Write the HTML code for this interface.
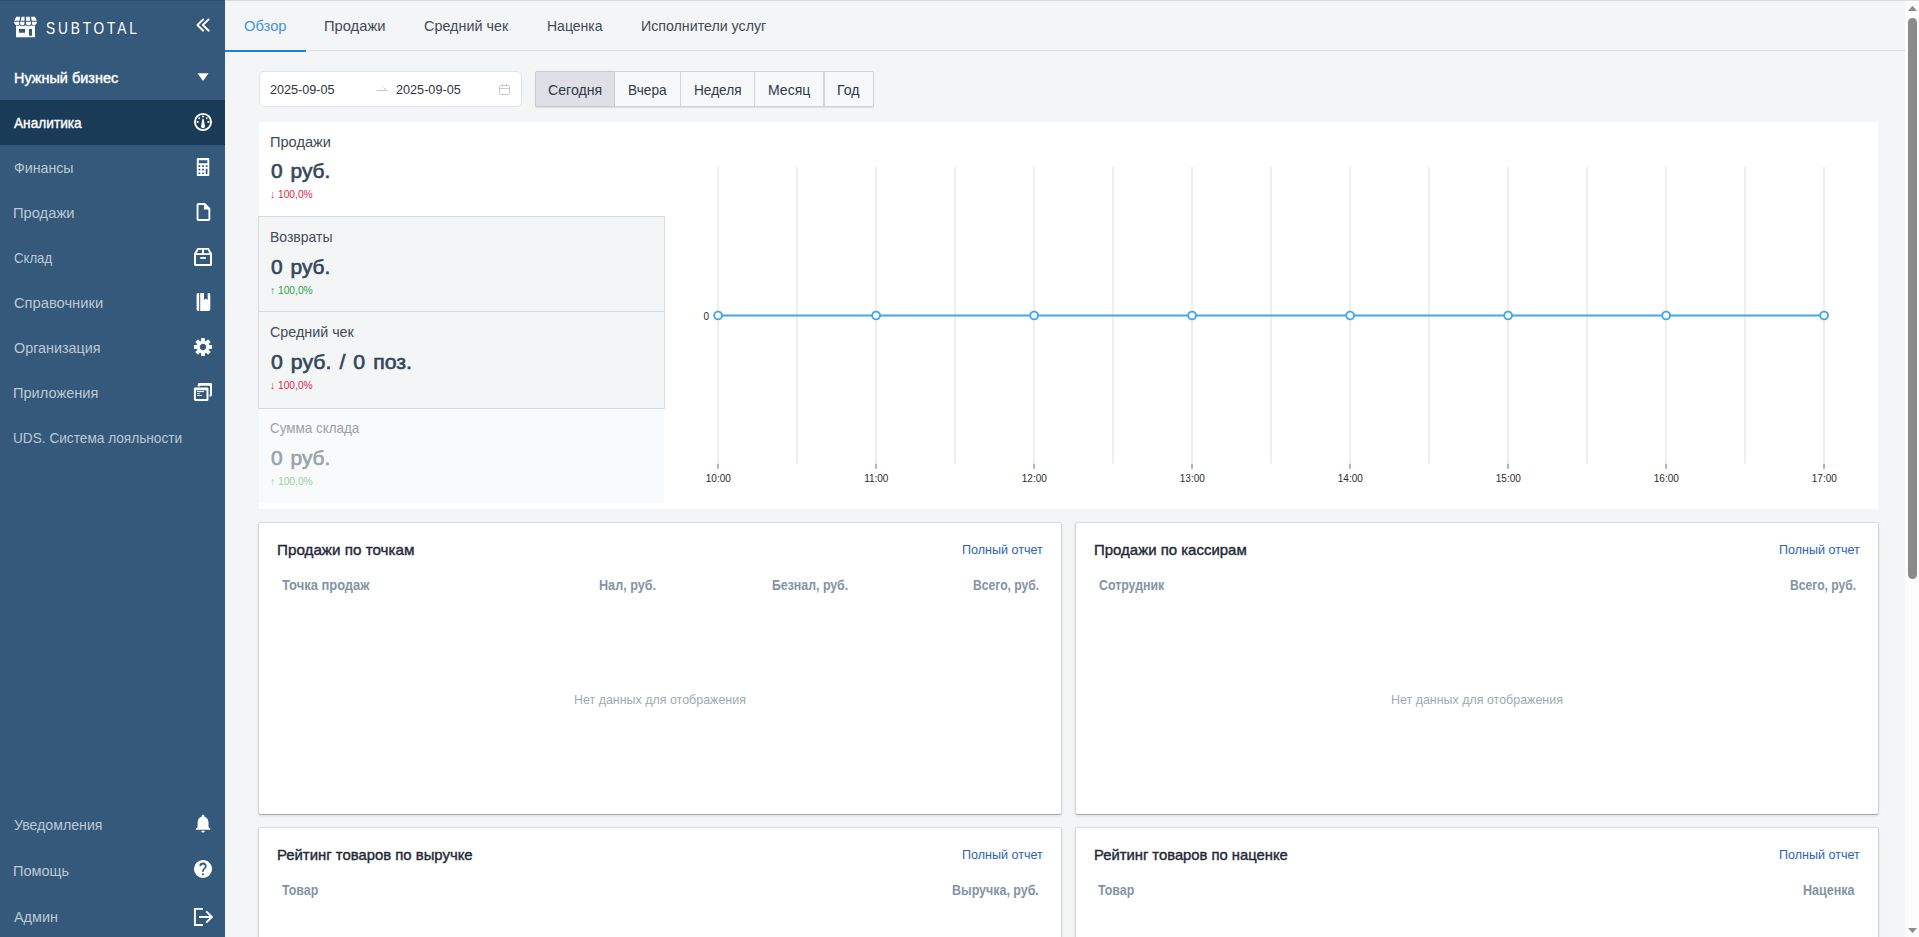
<!DOCTYPE html>
<html lang="ru">
<head>
<meta charset="utf-8">
<title>Subtotal — Аналитика</title>
<style>
*{box-sizing:border-box;margin:0;padding:0}
html,body{width:1919px;height:937px;overflow:hidden}
body{font-family:"Liberation Sans",sans-serif;background:#f4f5f7;color:#2f3e4e;position:relative;font-size:14px}
.t{position:absolute;white-space:nowrap;transform-origin:0 0;display:block}
.b{position:absolute}
#side{left:0;top:0;width:225px;height:937px;background:#34597a}
#act{left:0;top:100px;width:225px;height:45px;background:#193b57}
#ico{position:absolute;left:0;top:0}
#topline{left:0;top:0;width:1919px;height:1px;background:rgba(0,0,0,.11)}
#tabline{left:225px;top:50px;width:1680px;height:1px;background:#dcdee3}
#tabact{left:225px;top:50px;width:81px;height:2px;background:#2080c9}
#dr{left:259px;top:71px;width:263px;height:36px;background:#fff;border:1px solid #e2e4e8;border-radius:5px}
#bg{left:535px;top:71px;width:339px;height:36px;background:#f7f8fa;border:1px solid #d0d4da;border-radius:2px;box-shadow:0 1px 1px rgba(0,0,0,.10)}
#bgon{left:535px;top:71px;width:80px;height:36px;background:#dee0e6;border:1px solid #c6cad1;border-radius:2px 0 0 2px}
.sep{top:72px;width:1px;height:34px;background:#d3d6dc}
#ov{left:259px;top:122px;width:1619px;height:387px;background:#fff}
.kg{left:258px;width:407px;background:#f4f5f7;border:1px solid #d6d9de}
#k4{left:259px;top:409px;width:405px;height:94px;background:#f9fafb}
.card{background:#fff;border:1px solid #d2d5d9;border-top-color:#dadce0;border-bottom-color:#a6aab0;border-radius:3px;box-shadow:0 1px 3px rgba(0,0,0,.10)}
#sb{left:1905px;top:0;width:14px;height:937px;background:#fcfcfc}
#thumb{left:1908px;top:18px;width:9px;height:561px;border-radius:4.5px;background:#8b8b8b}
</style>
</head>
<body>
<div class="b" id="side"></div>
<div class="b" id="act"></div>
<svg id="ico" width="225" height="937" viewBox="0 0 225 937" style="left:0;top:0" fill="#fff">
  <!-- shop logo -->
  <path d="M16.2 16.8H20.2L19.5 20.8H14.3Z M21.6 16.8H24.6V20.8H20.7Z M26 16.8H29.8L30.2 20.8H26Z M31 16.8H35L36.9 20.8H31.7Z"/>
  <path d="M14 21.8H19.2V23.4Q19.2 25.3 17.2 25.3H16.2Q14.6 24.6 14 22.6Z M20 21.8H24.5V23.3Q24.5 25.6 22.2 25.6Q20 25.6 20 23.3Z M26 21.8H31V23.3Q31 25.6 28.5 25.6Q26 25.6 26 23.3Z M31.9 21.8H36.9V22.6Q36.3 24.6 34.7 25.3H33.9Q31.9 25.3 31.9 23.4Z"/>
  <path fill-rule="evenodd" d="M16 25.4Q17.8 26.3 19.6 25.2Q22.2 27.2 25.2 25.3Q28.5 27.2 31.5 25.2Q33.3 26.3 35 25.4V37.2H16Z M18.9 29H25V32.8H18.9Z M29 29H32V35.8H29Z"/>
  <!-- collapse chevrons -->
  <path d="M203.3 19.4L197.4 25.05L203.3 30.7M208.7 19.4L202.8 25.05L208.7 30.7" fill="none" stroke="#fff" stroke-width="1.9" stroke-linecap="round" stroke-linejoin="round"/>
  <!-- caret -->
  <path d="M197.5 73.3H208.5L203 80.9Z"/>
  <!-- gauge -->
  <g transform="translate(203 122)">
    <circle r="8.1" fill="none" stroke="#fff" stroke-width="1.9"/>
    <path d="M-.55 -3.2H.55L2 4.3A2 2 0 0 1 -2 4.3Z"/>
    <rect x="-1.1" y="-6.2" width="2.2" height="1.4" rx=".5"/>
    <circle cx="-3.7" cy="-3.7" r=".95"/><circle cx="3.7" cy="-3.7" r=".95"/>
    <rect x="-6.2" y="-1" width="1.7" height="2.1" rx=".4"/><rect x="4.5" y="-1" width="1.7" height="2.1" rx=".4"/>
  </g>
  <!-- calculator -->
  <path fill-rule="evenodd" d="M197.8 158H208.3Q209.3 158 209.3 159V175Q209.3 176 208.3 176H197.8Q196.8 176 196.8 175V159Q196.8 158 197.8 158Z M198.7 160.2V163.3H207.4V160.2Z M198.5 165.3V167H200.3V165.3Z M202.1 165.3V167H203.9V165.3Z M205.7 165.3V167H207.5V165.3Z M198.5 168.8V170.5H200.3V168.8Z M202.1 168.8V170.5H203.9V168.8Z M198.5 172.4V174.1H200.3V172.4Z M202.1 172.4V174.1H203.9V172.4Z M205.7 168.8V174.1H207.5V168.8Z"/>
  <!-- file -->
  <path fill-rule="evenodd" d="M198.4 203H205L210.3 208.3V219.2Q210.3 221 208.5 221H198.4Q196.6 221 196.6 219.2V204.8Q196.6 203 198.4 203Z M198.5 204.9V219.1H208.4V209.4H203.9V204.9Z"/>
  <!-- box -->
  <path fill-rule="evenodd" d="M197.4 248H208.8L212 253.6V264.4Q212 266 210.4 266H195.6Q194 266 194 264.4V253.6Z M198.5 249.8L196.7 253.2H202.1V249.8Z M204 249.8V253.2H209.4L207.6 249.8Z M196 255.1V264.1H210V255.1Z"/>
  <rect x="200.3" y="257" width="5.5" height="1.9"/>
  <!-- book -->
  <path d="M198.3 293H199.2V311H198.3Q196.6 311 196.6 309.3V294.7Q196.6 293 198.3 293Z M200.2 293H204V299.9L205.85 298.5L207.7 299.9V293H208.6Q210.3 293 210.3 294.7V309.3Q210.3 311 208.6 311H200.2Z"/>
  <!-- gear -->
  <g transform="translate(203 347)">
    <circle r="4.85" fill="none" stroke="#fff" stroke-width="3.3"/>
    <rect x="-2" y="-9.05" width="4" height="3.6" rx=".7" transform="rotate(0)"/><rect x="-2" y="-9.05" width="4" height="3.6" rx=".7" transform="rotate(45)"/><rect x="-2" y="-9.05" width="4" height="3.6" rx=".7" transform="rotate(90)"/><rect x="-2" y="-9.05" width="4" height="3.6" rx=".7" transform="rotate(135)"/><rect x="-2" y="-9.05" width="4" height="3.6" rx=".7" transform="rotate(180)"/><rect x="-2" y="-9.05" width="4" height="3.6" rx=".7" transform="rotate(225)"/><rect x="-2" y="-9.05" width="4" height="3.6" rx=".7" transform="rotate(270)"/><rect x="-2" y="-9.05" width="4" height="3.6" rx=".7" transform="rotate(315)"/>
  </g>
  <!-- apps -->
  <path fill-rule="evenodd" d="M195.3 387.4H207.1Q208.5 387.4 208.5 388.8V399.6Q208.5 401 207.1 401H195.3Q193.9 401 193.9 399.6V388.8Q193.9 387.4 195.3 387.4Z M195.9 390.2V399H206.5V390.2Z"/>
  <path d="M199.2 382.9H210.6Q212 382.9 212 384.3V395Q212 396.4 210.6 396.4H209.5V394.5H210V385.8H199.8V386.4H197.8V384.3Q197.8 382.9 199.2 382.9Z"/>
  <rect x="197" y="391.1" width="7" height="1"/><rect x="197" y="393.1" width="3" height="1" opacity=".7"/><rect x="197" y="394.9" width="5" height="1" opacity=".85"/>
  <!-- bell -->
  <g transform="translate(192.2 812.6) scale(.905)"><path d="M12 22c1.1 0 2-.9 2-2h-4c0 1.1.89 2 2 2zm6-6v-5c0-3.07-1.64-5.64-4.5-6.320V4c0-.83-.67-1.5-1.5-1.5s-1.5.67-1.500 1.500v.68C7.630 5.360 6 7.920 6 11v5l-2 2v1h16v-1l-2-2z"/></g>
  <!-- help -->
  <g transform="translate(192.15 858.1) scale(.905)"><path d="M15.070 11.250L14.170 12.170C13.450 12.890 13 13.500 13 15H11V14.500C11 13.390 11.450 12.390 12.170 11.670L13.410 10.410C13.780 10.050 14 9.550 14 9C14 7.890 13.100 7 12 7A2 2 0 0 0 10 9H8A4 4 0 0 1 12 5A4 4 0 0 1 16 9C16 9.880 15.640 10.670 15.070 11.250M13 19H11V17H13M12 2A10 10 0 0 0 2 12A10 10 0 0 0 12 22A10 10 0 0 0 22 12C22 6.470 17.500 2 12 2Z"/></g>
  <!-- logout -->
  <path d="M203 908.9H194.9V925H203M199 917H211M206.2 911.3L211.9 917L206.2 922.7" fill="none" stroke="#fff" stroke-width="1.9" stroke-linejoin="miter"/>
</svg>
<span class="t" style="left:46.49px;top:17px;font-size:17px;line-height:24px;color:#fff;transform:scaleX(0.8063);letter-spacing:3.5px">SUBTOTAL</span>
<span class="t" style="left:13.53px;top:69px;font-size:14px;line-height:18px;color:#fff;transform:scaleX(1.0320);-webkit-text-stroke:0.4px #fff">Нужный бизнес</span>
<span class="t" style="left:14.30px;top:113px;font-size:15px;line-height:20px;color:#fff;transform:scaleX(0.9114);-webkit-text-stroke:0.4px #fff">Аналитика</span>
<span class="t" style="left:13.59px;top:158px;font-size:15px;line-height:20px;color:#bcc8d4;transform:scaleX(0.9453)">Финансы</span>
<span class="t" style="left:13.32px;top:203px;font-size:15px;line-height:20px;color:#bcc8d4;transform:scaleX(0.9811)">Продажи</span>
<span class="t" style="left:13.64px;top:248px;font-size:15px;line-height:20px;color:#bcc8d4;transform:scaleX(0.8776)">Склад</span>
<span class="t" style="left:13.56px;top:293px;font-size:15px;line-height:20px;color:#bcc8d4;transform:scaleX(0.9804)">Справочники</span>
<span class="t" style="left:13.58px;top:338px;font-size:15px;line-height:20px;color:#bcc8d4;transform:scaleX(0.9566)">Организация</span>
<span class="t" style="left:13.33px;top:383px;font-size:15px;line-height:20px;color:#bcc8d4;transform:scaleX(0.9726)">Приложения</span>
<span class="t" style="left:13.39px;top:428px;font-size:15px;line-height:20px;color:#bcc8d4;transform:scaleX(0.9098)">UDS. Система лояльности</span>
<span class="t" style="left:13.59px;top:815px;font-size:15px;line-height:20px;color:#bcc8d4;transform:scaleX(0.9431)">Уведомления</span>
<span class="t" style="left:13.33px;top:861px;font-size:15px;line-height:20px;color:#bcc8d4;transform:scaleX(0.9689)">Помощь</span>
<span class="t" style="left:14.06px;top:907px;font-size:15px;line-height:20px;color:#bcc8d4;transform:scaleX(0.9596)">Админ</span>

<div class="b" id="tabline"></div>
<div class="b" id="tabact"></div>
<span class="t" style="left:243.86px;top:16px;font-size:15px;line-height:20px;color:#4593dc;transform:scaleX(0.9810)">Обзор</span>
<span class="t" style="left:324.42px;top:16px;font-size:15px;line-height:20px;color:#424a55;transform:scaleX(0.9811)">Продажи</span>
<span class="t" style="left:423.88px;top:16px;font-size:15px;line-height:20px;color:#424a55;transform:scaleX(0.9586)">Средний чек</span>
<span class="t" style="left:546.67px;top:16px;font-size:15px;line-height:20px;color:#424a55;transform:scaleX(0.9333)">Наценка</span>
<span class="t" style="left:641.25px;top:16px;font-size:15px;line-height:20px;color:#424a55;transform:scaleX(0.9468)">Исполнители услуг</span>

<div class="b" id="dr"></div>
<div class="b" id="bg"></div>
<div class="b" id="bgon"></div>
<div class="b sep" style="left:680px"></div>
<div class="b sep" style="left:754px"></div>
<div class="b sep" style="left:823px;width:2px"></div>
<svg class="b" style="left:370px;top:78px" width="150" height="24" viewBox="370 78 150 24">
  <path d="M377 90.5H387L383.4 87.4" fill="none" stroke="#bdbfc3" stroke-width=".9"/>
  <g fill="none" stroke="#c4c7cc" stroke-width="1"><rect x="499.5" y="85.5" width="10" height="9" rx=".8"/><path d="M499.5 88.5H509.5M502.5 84V86.5M506.5 84V86.5"/></g>
</svg>
<span class="t" style="left:269.77px;top:82px;font-size:13px;line-height:16px;color:#30343a;transform:scaleX(0.9701)">2025-09-05</span>
<span class="t" style="left:396.47px;top:82px;font-size:13px;line-height:16px;color:#30343a;transform:scaleX(0.9732)">2025-09-05</span>
<span class="t" style="left:547.69px;top:80px;font-size:15px;line-height:20px;color:#2f3a47;transform:scaleX(0.9417)">Сегодня</span>
<span class="t" style="left:628.19px;top:80px;font-size:15px;line-height:20px;color:#2f3a47;transform:scaleX(0.9115)">Вчера</span>
<span class="t" style="left:693.99px;top:80px;font-size:15px;line-height:20px;color:#2f3a47;transform:scaleX(0.9089)">Неделя</span>
<span class="t" style="left:768.06px;top:80px;font-size:15px;line-height:20px;color:#2f3a47;transform:scaleX(0.9364)">Месяц</span>
<span class="t" style="left:836.95px;top:80px;font-size:15px;line-height:20px;color:#2f3a47;transform:scaleX(0.9451)">Год</span>

<div class="b" id="ov"></div>
<div class="b kg" style="top:216px;height:96px"></div>
<div class="b kg" style="top:311px;height:98px"></div>
<div class="b" id="k4"></div>
<span class="t" style="left:270.13px;top:132px;font-size:15px;line-height:20px;color:#424a55;transform:scaleX(0.9728)">Продажи</span>
<span class="t" style="left:270.17px;top:227px;font-size:15px;line-height:20px;color:#424a55;transform:scaleX(0.9323)">Возвраты</span>
<span class="t" style="left:270.38px;top:322px;font-size:15px;line-height:20px;color:#424a55;transform:scaleX(0.9540)">Средний чек</span>
<span class="t" style="left:270.43px;top:418px;font-size:15px;line-height:20px;color:#9aa1a9;transform:scaleX(0.8960)">Сумма склада</span>
<span class="t" style="left:270.58px;top:157px;font-size:20px;line-height:28px;color:#33465a;transform:scaleX(1.0447);-webkit-text-stroke:0.6px #33465a;word-spacing:2px">0 руб.</span>
<span class="t" style="left:270.58px;top:253px;font-size:20px;line-height:28px;color:#33465a;transform:scaleX(1.0447);-webkit-text-stroke:0.6px #33465a;word-spacing:2px">0 руб.</span>
<span class="t" style="left:270.57px;top:348px;font-size:20px;line-height:28px;color:#33465a;transform:scaleX(1.0623);-webkit-text-stroke:0.6px #33465a;word-spacing:2px">0 руб. / 0 поз.</span>
<span class="t" style="left:270.58px;top:444px;font-size:20px;line-height:28px;color:#99a2ac;transform:scaleX(1.0447);-webkit-text-stroke:0.6px #99a2ac;word-spacing:2px">0 руб.</span>
<span class="t" style="left:269.67px;top:187px;font-size:11px;line-height:14px;color:#e3263d;transform:scaleX(0.9303)">↓ 100,0%</span>
<span class="t" style="left:269.67px;top:283px;font-size:11px;line-height:14px;color:#26a63e;transform:scaleX(0.9303)">↑ 100,0%</span>
<span class="t" style="left:269.67px;top:378px;font-size:11px;line-height:14px;color:#e3263d;transform:scaleX(0.9303)">↓ 100,0%</span>
<span class="t" style="left:269.67px;top:474px;font-size:11px;line-height:14px;color:#92d29e;transform:scaleX(0.9303)">↑ 100,0%</span>

<svg class="b" style="left:680px;top:122px" width="1198" height="387" viewBox="680 122 1198 387" font-family="'Liberation Sans',sans-serif" font-size="10" fill="#2b2b2b">
<rect x="717" y="167" width="2" height="296.8" fill="#eeeeee"/>
<rect x="717" y="463.8" width="2" height="5" fill="#b3b3b3"/>
<text x="718.3" y="482" text-anchor="middle">10:00</text>
<rect x="796" y="167" width="2" height="296.8" fill="#eeeeee"/>
<rect x="875" y="167" width="2" height="296.8" fill="#eeeeee"/>
<rect x="875" y="463.8" width="2" height="5" fill="#b3b3b3"/>
<text x="876.3" y="482" text-anchor="middle">11:00</text>
<rect x="954" y="167" width="2" height="296.8" fill="#eeeeee"/>
<rect x="1033" y="167" width="2" height="296.8" fill="#eeeeee"/>
<rect x="1033" y="463.8" width="2" height="5" fill="#b3b3b3"/>
<text x="1034.3" y="482" text-anchor="middle">12:00</text>
<rect x="1112" y="167" width="2" height="296.8" fill="#eeeeee"/>
<rect x="1191" y="167" width="2" height="296.8" fill="#eeeeee"/>
<rect x="1191" y="463.8" width="2" height="5" fill="#b3b3b3"/>
<text x="1192.3" y="482" text-anchor="middle">13:00</text>
<rect x="1270" y="167" width="2" height="296.8" fill="#eeeeee"/>
<rect x="1349" y="167" width="2" height="296.8" fill="#eeeeee"/>
<rect x="1349" y="463.8" width="2" height="5" fill="#b3b3b3"/>
<text x="1350.3" y="482" text-anchor="middle">14:00</text>
<rect x="1428" y="167" width="2" height="296.8" fill="#eeeeee"/>
<rect x="1507" y="167" width="2" height="296.8" fill="#eeeeee"/>
<rect x="1507" y="463.8" width="2" height="5" fill="#b3b3b3"/>
<text x="1508.3" y="482" text-anchor="middle">15:00</text>
<rect x="1586" y="167" width="2" height="296.8" fill="#eeeeee"/>
<rect x="1665" y="167" width="2" height="296.8" fill="#eeeeee"/>
<rect x="1665" y="463.8" width="2" height="5" fill="#b3b3b3"/>
<text x="1666.3" y="482" text-anchor="middle">16:00</text>
<rect x="1744" y="167" width="2" height="296.8" fill="#eeeeee"/>
<rect x="1823" y="167" width="2" height="296.8" fill="#eeeeee"/>
<rect x="1823" y="463.8" width="2" height="5" fill="#b3b3b3"/>
<text x="1824.3" y="482" text-anchor="middle">17:00</text>
<path d="M718 315.5H1824" stroke="#43a6ea" stroke-width="2" fill="none"/>
<circle cx="718.1" cy="315.5" r="3.9" fill="#fff" stroke="#43a6ea" stroke-width="1.9"/>
<circle cx="876.1" cy="315.5" r="3.9" fill="#fff" stroke="#43a6ea" stroke-width="1.9"/>
<circle cx="1034.1" cy="315.5" r="3.9" fill="#fff" stroke="#43a6ea" stroke-width="1.9"/>
<circle cx="1192.1" cy="315.5" r="3.9" fill="#fff" stroke="#43a6ea" stroke-width="1.9"/>
<circle cx="1350.1" cy="315.5" r="3.9" fill="#fff" stroke="#43a6ea" stroke-width="1.9"/>
<circle cx="1508.1" cy="315.5" r="3.9" fill="#fff" stroke="#43a6ea" stroke-width="1.9"/>
<circle cx="1666.1" cy="315.5" r="3.9" fill="#fff" stroke="#43a6ea" stroke-width="1.9"/>
<circle cx="1824.1" cy="315.5" r="3.9" fill="#fff" stroke="#43a6ea" stroke-width="1.9"/>
<text x="709" y="319.6" text-anchor="end">0</text>
</svg>

<div class="b card" style="left:258px;top:522px;width:804px;height:293px"></div>
<div class="b card" style="left:1075px;top:522px;width:804px;height:293px"></div>
<div class="b card" style="left:258px;top:827px;width:804px;height:293px"></div>
<div class="b card" style="left:1075px;top:827px;width:804px;height:293px"></div>
<span class="t" style="left:277.09px;top:540px;font-size:15px;line-height:20px;color:#1f2a36;transform:scaleX(1.0138);-webkit-text-stroke:0.4px #1f2a36">Продажи по точкам</span>
<span class="t" style="left:1093.60px;top:540px;font-size:15px;line-height:20px;color:#1f2a36;transform:scaleX(0.9977);-webkit-text-stroke:0.4px #1f2a36">Продажи по кассирам</span>
<span class="t" style="left:277.11px;top:845px;font-size:15px;line-height:20px;color:#1f2a36;transform:scaleX(0.9921);-webkit-text-stroke:0.4px #1f2a36">Рейтинг товаров по выручке</span>
<span class="t" style="left:1093.61px;top:845px;font-size:15px;line-height:20px;color:#1f2a36;transform:scaleX(0.9854);-webkit-text-stroke:0.4px #1f2a36">Рейтинг товаров по наценке</span>
<span class="t" style="left:962.33px;top:542px;font-size:13px;line-height:16px;color:#2c63b3;transform:scaleX(0.9661)">Полный отчет</span>
<span class="t" style="left:1778.93px;top:542px;font-size:13px;line-height:16px;color:#2c63b3;transform:scaleX(0.9661)">Полный отчет</span>
<span class="t" style="left:962.33px;top:847px;font-size:13px;line-height:16px;color:#2c63b3;transform:scaleX(0.9661)">Полный отчет</span>
<span class="t" style="left:1778.93px;top:847px;font-size:13px;line-height:16px;color:#2c63b3;transform:scaleX(0.9661)">Полный отчет</span>
<span class="t" style="left:281.70px;top:576px;font-size:14px;line-height:18px;color:#8494a5;transform:scaleX(0.9238);font-weight:bold">Точка продаж</span>
<span class="t" style="left:599.12px;top:576px;font-size:14px;line-height:18px;color:#8494a5;transform:scaleX(0.9024);font-weight:bold">Нал, руб.</span>
<span class="t" style="left:771.64px;top:576px;font-size:14px;line-height:18px;color:#8494a5;transform:scaleX(0.8814);font-weight:bold">Безнал, руб.</span>
<span class="t" style="left:973.05px;top:576px;font-size:14px;line-height:18px;color:#8494a5;transform:scaleX(0.8669);font-weight:bold">Всего, руб.</span>
<span class="t" style="left:1098.56px;top:576px;font-size:14px;line-height:18px;color:#8494a5;transform:scaleX(0.8833);font-weight:bold">Сотрудник</span>
<span class="t" style="left:1789.65px;top:576px;font-size:14px;line-height:18px;color:#8494a5;transform:scaleX(0.8669);font-weight:bold">Всего, руб.</span>
<span class="t" style="left:281.70px;top:881px;font-size:14px;line-height:18px;color:#8494a5;transform:scaleX(0.8840);font-weight:bold">Товар</span>
<span class="t" style="left:952.43px;top:881px;font-size:14px;line-height:18px;color:#8494a5;transform:scaleX(0.8896);font-weight:bold">Выручка, руб.</span>
<span class="t" style="left:1098.30px;top:881px;font-size:14px;line-height:18px;color:#8494a5;transform:scaleX(0.8840);font-weight:bold">Товар</span>
<span class="t" style="left:1803.33px;top:881px;font-size:14px;line-height:18px;color:#8494a5;transform:scaleX(0.8965);font-weight:bold">Наценка</span>
<span class="t" style="left:574.34px;top:692px;font-size:13px;line-height:16px;color:#9fa9b4;transform:scaleX(0.9575)">Нет данных для отображения</span>
<span class="t" style="left:1390.94px;top:692px;font-size:13px;line-height:16px;color:#9fa9b4;transform:scaleX(0.9575)">Нет данных для отображения</span>

<div class="b" id="sb"></div>
<div class="b" id="topline"></div>
<div class="b" id="thumb"></div>
<svg class="b" style="left:1904px;top:0" width="15" height="937" viewBox="1904 0 15 937"><path d="M1908 10.9H1917L1912.5 5.7Z M1908 928H1917L1912.5 932.9Z" fill="#8b8b8b"/></svg>
</body>
</html>
